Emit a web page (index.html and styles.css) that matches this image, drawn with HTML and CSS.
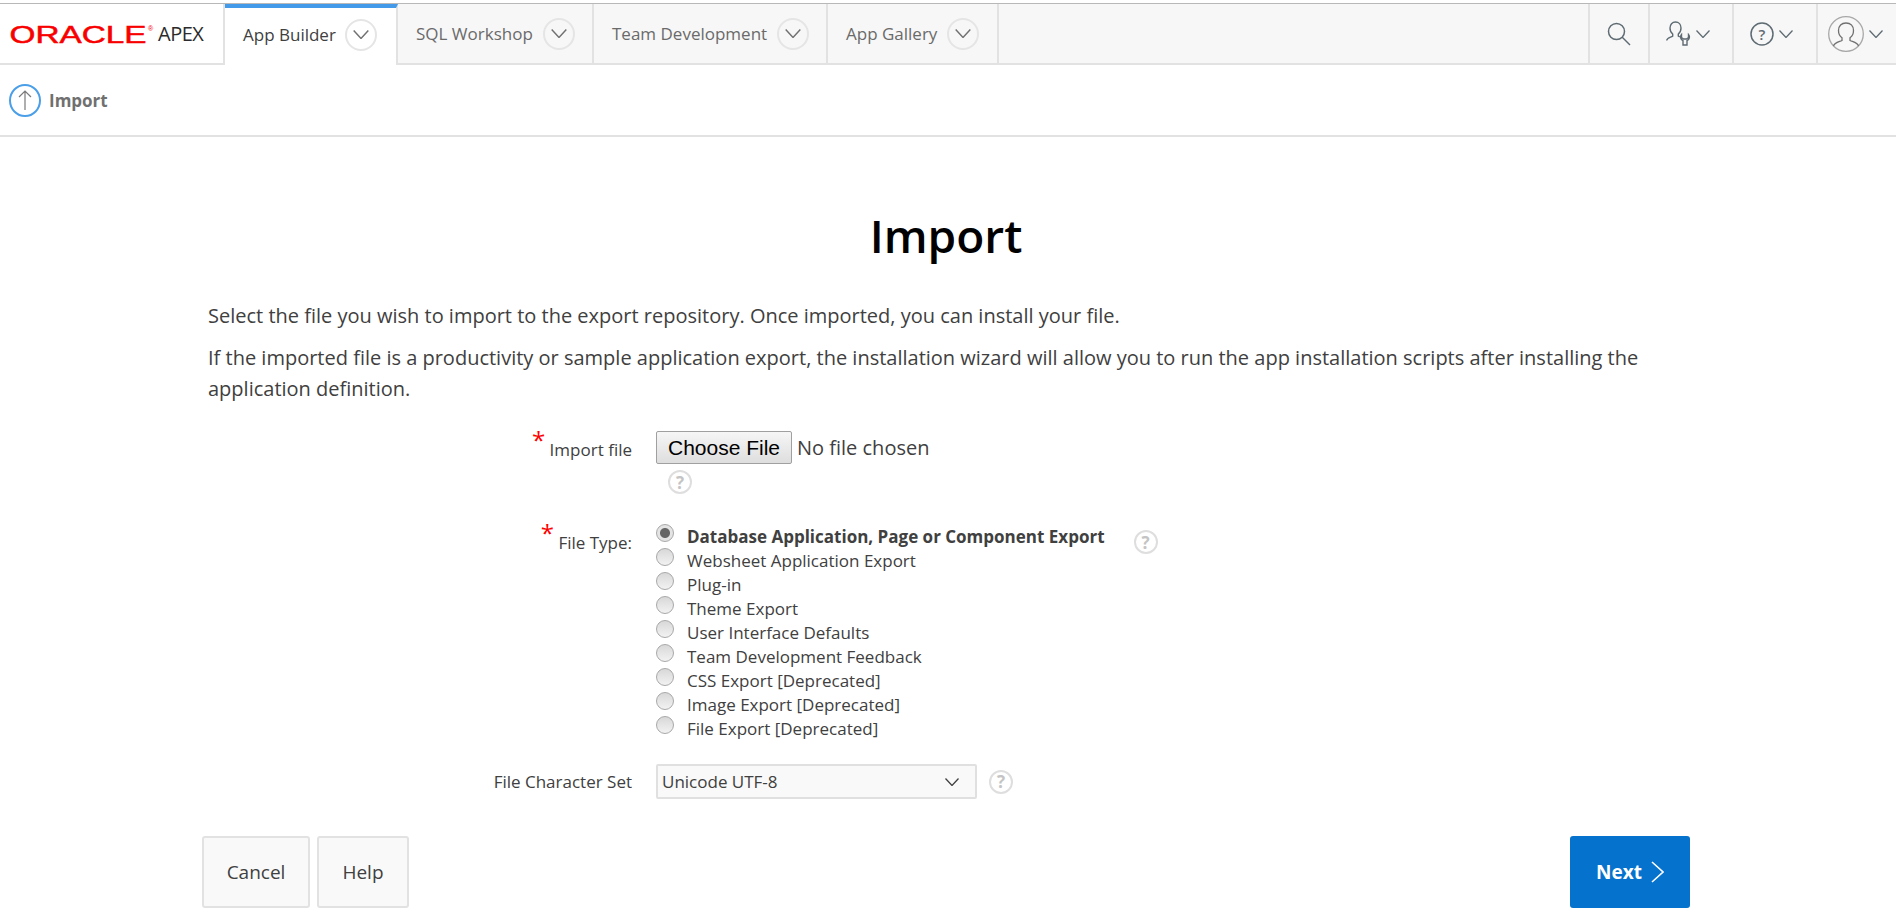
FILE: index.html
```html
<!DOCTYPE html>
<html lang="en">
<head>
<meta charset="UTF-8">
<meta name="viewport" content="width=device-width, initial-scale=1.0">
<title>Import</title>
<link rel="stylesheet" href="styles.css">
</head>
<body>
<svg class="icon-defs" width="0" height="0">
  <symbol id="chevron" viewBox="0 0 14 8"><path d="M.5.5 7 7.5 13.5.5" fill="none" stroke="currentColor" stroke-width="1.3"/></symbol>
</svg>

<header class="topbar">
  <a class="logo">
    <svg class="logo-mark" width="146" height="28" viewBox="0 0 146 28">
      <text class="logo-word" x="0.5" y="23" textLength="137" lengthAdjust="spacingAndGlyphs">ORACLE</text>
      <text class="logo-reg" x="139" y="11">®</text>
    </svg>
    <span class="logo-name">APEX</span>
  </a>
  <nav class="tabs">
    <a class="tab tab-active tab-builder"><span>App Builder</span><span class="tab-toggle"><svg width="16" height="9"><use href="#chevron"/></svg></span></a>
    <a class="tab tab-sql"><span>SQL Workshop</span><span class="tab-toggle"><svg width="16" height="9"><use href="#chevron"/></svg></span></a>
    <a class="tab tab-team"><span>Team Development</span><span class="tab-toggle"><svg width="16" height="9"><use href="#chevron"/></svg></span></a>
    <a class="tab tab-gallery"><span>App Gallery</span><span class="tab-toggle"><svg width="16" height="9"><use href="#chevron"/></svg></span></a>
  </nav>
  <div class="tools">
    <a class="tool tool-search">
      <svg width="24" height="24" viewBox="0 0 24 24" fill="none" stroke="#5f6b73" stroke-width="1.5"><circle cx="9.5" cy="9.5" r="8"/><path d="M15 15l8 8"/></svg>
    </a>
    <a class="tool tool-admin">
      <svg width="25" height="25" viewBox="0 0 25 25" fill="none" stroke="#5f6b73" stroke-width="1.4"><path d="M.7 19.500c.4-3 3.800-3 6-4.300v-2.200C4.800 11.500 4 9.500 4 7c0-3.500 2.200-6 5.500-6S15 3.500 15 7c0 2.500-.8 4.500-2.700 6v2l1.500.8"/><path d="M15.500 13.500c-1.800 2-1 5 1.500 6.200v4.300h4v-4.300c2.500-1.200 3.300-4.200 1.500-6.200v3l-2 1.500h-3l-2-1.500z"/></svg>
      <svg class="tool-chevron" width="14" height="8"><use href="#chevron"/></svg>
    </a>
    <a class="tool tool-help">
      <svg width="24" height="24" viewBox="0 0 24 24" fill="none" stroke="#5f6b73" stroke-width="1.5"><circle cx="12" cy="12" r="11"/><text class="help-mark" x="12" y="17.500" text-anchor="middle">?</text></svg>
      <svg class="tool-chevron" width="14" height="8"><use href="#chevron"/></svg>
    </a>
    <a class="tool tool-user">
      <svg width="36" height="36" viewBox="0 0 36 36" fill="none" stroke="#a8a8a8" stroke-width="1.3"><circle cx="18" cy="18" r="17.300"/><path d="M5.500 30c1-3.500 5-4 8.500-5.500v-2.700c-2.500-1.800-3.500-4.300-3.500-7.300 0-4.500 3-7.500 7.500-7.500s7.500 3 7.500 7.500c0 3-1 5.500-3.500 7.300v2.700c3.500 1.500 7.500 2 8.500 5.500" stroke="#707070"/></svg>
      <svg class="tool-chevron" width="14" height="8"><use href="#chevron"/></svg>
    </a>
  </div>
</header>

<div class="crumb">
  <span class="crumb-icon">
    <svg width="14" height="20" viewBox="0 0 14 20" fill="none" stroke="#7a7a7a" stroke-width="1.200"><path d="M7 20V1M1 7l6-6 6 6"/></svg>
  </span>
  <span class="crumb-title">Import</span>
</div>

<main class="page">
  <h1>Import</h1>
  <p class="intro">Select the file you wish to import to the export repository. Once imported, you can install your file.</p>
  <p class="intro">If the imported file is a productivity or sample application export, the installation wizard will allow you to run the app installation scripts after installing the application definition.</p>

  <form class="wizard">
    <div class="row row-file">
      <label class="row-label label-file"><span class="req">*</span> Import file</label>
      <div class="row-field">
        <div class="file-line">
          <button type="button" class="file-btn">Choose File</button>
          <span class="file-status">No file chosen</span>
        </div>
        <span class="help-dot help-below">?</span>
      </div>
    </div>

    <div class="row row-type">
      <label class="row-label label-type"><span class="req">*</span> File Type:</label>
      <div class="row-field radio-field">
        <div class="radios">
          <label class="radio radio-on"><input type="radio" name="ft" checked><span>Database Application, Page or Component Export</span></label>
          <label class="radio"><input type="radio" name="ft"><span>Websheet Application Export</span></label>
          <label class="radio"><input type="radio" name="ft"><span>Plug-in</span></label>
          <label class="radio"><input type="radio" name="ft"><span>Theme Export</span></label>
          <label class="radio"><input type="radio" name="ft"><span>User Interface Defaults</span></label>
          <label class="radio"><input type="radio" name="ft"><span>Team Development Feedback</span></label>
          <label class="radio"><input type="radio" name="ft"><span>CSS Export [Deprecated]</span></label>
          <label class="radio"><input type="radio" name="ft"><span>Image Export [Deprecated]</span></label>
          <label class="radio"><input type="radio" name="ft"><span>File Export [Deprecated]</span></label>
        </div>
        <span class="help-dot help-type">?</span>
      </div>
    </div>

    <div class="row row-charset">
      <label class="row-label">File Character Set</label>
      <div class="row-field charset-field">
        <div class="select-wrap">
          <select class="select">
            <option>Unicode UTF-8</option>
          </select>
          <svg class="select-chevron" width="14" height="8"><use href="#chevron"/></svg>
        </div>
        <span class="help-dot">?</span>
      </div>
    </div>

    <div class="actions">
      <div class="actions-left">
        <button type="button" class="btn btn-cancel">Cancel</button>
        <button type="button" class="btn btn-help">Help</button>
      </div>
      <button type="button" class="btn btn-next">Next
        <svg width="13" height="22" viewBox="0 0 13 22" fill="none" stroke="#fff" stroke-width="1.600"><path d="M1 1l11 10L1 21"/></svg>
      </button>
    </div>
  </form>
</main>
</body>
</html>
```

FILE: styles.css
```css
* {
  box-sizing: border-box;
}
body {
  margin: 0;
  font-family: "Open Sans", Arial, sans-serif;
  color: #404040;
  background-color: #ffffff;
  overflow: hidden;
}
.icon-defs {
  position: absolute;
}

/* top bar */
.topbar {
  display: flex;
  height: 62px;
  margin-top: 3px;
  border-top: 1px solid #b8b8b8;
  border-bottom: 2px solid #e2e2e2;
  background-color: #f7f7f7;
}
.logo {
  width: 225px;
  display: flex;
  align-items: center;
  padding-left: 9px;
  background-color: #ffffff;
  border-right: 2px solid #e2e2e2;
}
.logo-mark {
  flex: none;
}
.logo-word {
  font-family: "Liberation Sans", Arial, sans-serif;
  font-size: 24px;
  fill: #f80000;
  stroke: #f80000;
  stroke-width: 0.5;
}
.logo-reg {
  font-family: "Liberation Sans", Arial, sans-serif;
  font-size: 7px;
  fill: #f80000;
}
.logo-name {
  margin-left: 3px;
  font-size: 20px;
  color: #2b2b2b;
  letter-spacing: -0.5px;
}
.tabs {
  display: flex;
}
.tab {
  display: flex;
  align-items: center;
  justify-content: space-between;
  padding: 0 17px 0 18px;
  border-right: 2px solid #e2e2e2;
  font-size: 17px;
  color: #6a6a6a;
}
.tab-builder { width: 173px; padding-right: 19px; }
.tab-sql { width: 196px; }
.tab-team { width: 234px; }
.tab-gallery { width: 171px; padding-right: 18px; }
.tab-active {
  margin-bottom: -2px;
  background-color: #ffffff;
  border-top: 4px solid #429ae8;
  color: #404040;
  padding-bottom: 4px;
}
.tab-toggle {
  width: 32px;
  height: 32px;
  display: flex;
  align-items: center;
  justify-content: center;
  border: 2px solid #e5e5e5;
  border-radius: 50%;
  color: #707070;
}
.tools {
  margin-left: auto;
  display: flex;
  height: 100%;
}
.tool {
  display: flex;
  align-items: center;
  justify-content: center;
  gap: 5px;
  border-left: 2px solid #e2e2e2;
  color: #5f6b73;
}
.tool-search { width: 60px; }
.tool-admin { width: 84px; padding-right: 6px; }
.tool-help { width: 84px; padding-right: 8px; }
.tool-user { width: 80px; padding-right: 4px; }
.help-mark {
  font-family: "Open Sans", Arial, sans-serif;
  font-size: 15px;
  font-weight: 600;
  fill: #5f6b73;
  stroke: none;
}

/* breadcrumb strip */
.crumb {
  height: 72px;
  display: flex;
  align-items: center;
  gap: 8px;
  padding-left: 9px;
  border-bottom: 2px solid #e2e2e2;
}
.crumb-icon {
  width: 32px;
  height: 33px;
  display: flex;
  align-items: center;
  justify-content: center;
  border: 2px solid #4a9fe8;
  border-radius: 50%;
}
.crumb-title {
  font-size: 17px;
  font-weight: 700;
  color: #707070;
}

/* page body */
.page {
  padding: 0 206px 6px 202px;
}
h1 {
  margin: 62px 0 0;
  font-size: 46px;
  line-height: 72px;
  font-weight: 600;
  text-align: center;
  color: #000000;
}
.intro {
  margin: 0 6px;
  font-size: 20px;
  line-height: 31px;
}
h1 + .intro {
  margin-top: 29px;
  margin-bottom: 11px;
}

.row {
  display: flex;
  gap: 24px;
}
.row-label {
  width: 430px;
  flex: none;
  text-align: right;
  font-size: 17px;
}
.req {
  color: #ff0000;
  font-size: 24px;
  line-height: 1;
  position: relative;
  top: -7px;
}
.row-file {
  margin-top: 27px;
  height: 93px;
}
.label-file {
  padding-top: 4px;
}
.file-line {
  display: flex;
  align-items: center;
  gap: 5px;
}
.file-btn {
  width: 136px;
  height: 33px;
  padding: 0;
  font-family: "Liberation Sans", Arial, sans-serif;
  font-size: 21px;
  color: #000000;
  background: linear-gradient(#f6f6f6, #dedede);
  border: 1px solid #a0a0a0;
  border-radius: 2px;
}
.file-status {
  font-size: 20px;
}
.help-dot {
  width: 24px;
  height: 24px;
  flex: none;
  display: flex;
  align-items: center;
  justify-content: center;
  border: 2px solid #dedede;
  border-radius: 50%;
  color: #c4c4c4;
  font-size: 17px;
  font-weight: 700;
}
.help-below {
  margin: 6px 0 0 12px;
}
.row-type {
  height: 240px;
}
.label-type {
  padding-top: 4px;
}
.radio-field {
  display: flex;
  align-items: flex-start;
  gap: 29px;
}
.radio {
  display: flex;
  gap: 13px;
  height: 24px;
  font-size: 17px;
  line-height: 26px;
}
.radio input {
  appearance: none;
  flex: none;
  width: 18px;
  height: 18px;
  margin: 0;
  border: 1px solid #a8a8a8;
  border-radius: 50%;
  background: linear-gradient(#d8d8d8, #f2f2f2);
}
.radio input:checked {
  background: radial-gradient(circle, #666666 0 4.5px, #e4e4e4 5.5px);
}
.radio-on {
  font-weight: 700;
}
.help-type {
  margin-top: 6px;
}
.row-charset {
  align-items: center;
  height: 35px;
}
.charset-field {
  display: flex;
  align-items: center;
  gap: 12px;
}
.select-wrap {
  position: relative;
  width: 321px;
  height: 35px;
}
.select {
  appearance: none;
  width: 100%;
  height: 100%;
  padding: 0 0 0 4px;
  font-family: "Open Sans", Arial, sans-serif;
  font-size: 17px;
  color: #404040;
  background-color: #f9f9f9;
  border: 2px solid #e0e0e0;
  border-radius: 2px;
}
.select-chevron {
  position: absolute;
  top: 14px;
  right: 18px;
  color: #404040;
}

.actions {
  display: flex;
  justify-content: space-between;
  margin-top: 37px;
}
.actions-left {
  display: flex;
  gap: 7px;
}
.btn {
  height: 72px;
  font-family: "Open Sans", Arial, sans-serif;
  font-size: 19px;
  color: #404040;
  background-color: #f9f9f9;
  border: 2px solid #e2e2e2;
  border-radius: 3px;
}
.btn-cancel { width: 108px; }
.btn-help { width: 92px; }
.btn-next {
  width: 120px;
  display: flex;
  align-items: center;
  justify-content: center;
  gap: 9px;
  font-weight: 700;
  color: #ffffff;
  background-color: #0572ce;
  border: none;
}
```
